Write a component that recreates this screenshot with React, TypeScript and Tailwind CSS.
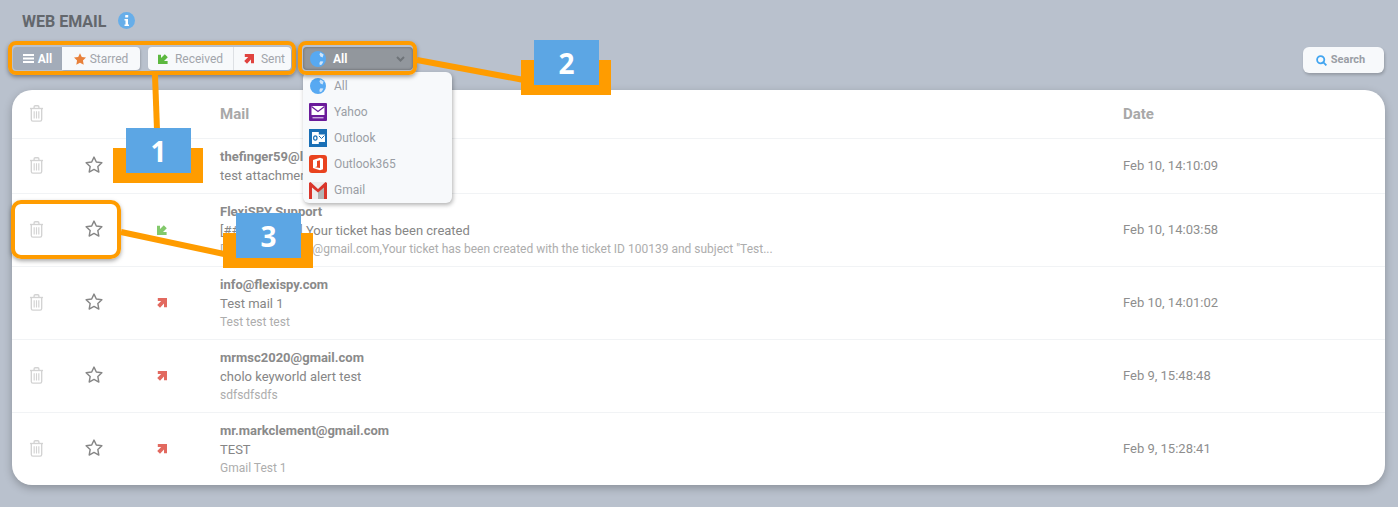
import React from "react";

const Trash = () => (
  <svg className="mt-[-2px]" width="15" height="17" viewBox="0 0 16 19" fill="none" stroke="#d3d3d3" strokeWidth="1.5">
    <path d="M0.7 3.9H15.3" />
    <path d="M5.3 3.7V2.2C5.3 1.3 5.9 0.8 6.6 0.8H9.4C10.1 0.8 10.7 1.3 10.7 2.2V3.7" />
    <path d="M2.2 4V16.2C2.2 17.3 2.9 18 3.9 18H12.1C13.1 18 13.8 17.3 13.8 16.2V4" />
    <path d="M5.4 7V15M8 7V15M10.6 7V15" strokeWidth="1.3" />
  </svg>
);

const Star = () => (
  <svg className="mt-[-3px]" width="18" height="17" viewBox="0 0 20 19" fill="none" stroke="#868686" strokeWidth="1.6" strokeLinejoin="round">
    <path d="M10 1.2L12.6 6.7L18.8 7.5L14.3 11.8L15.4 17.9L10 15L4.6 17.9L5.7 11.8L1.2 7.5L7.4 6.7Z" />
  </svg>
);

const ArrowIn = ({ c = "#83c96b" }: { c?: string }) => (
  <svg width="10" height="10" viewBox="0 0 10 10">
    <path d="M0 0.8H3V4L6.8 0.2L9.8 3.2L6 7H9.6V10H0Z" fill={c} />
  </svg>
);

const ArrowOut = ({ c = "#e2695f" }: { c?: string }) => (
  <svg width="10" height="10" viewBox="0 0 10 10">
    <path d="M10 0V9.2H7V5.6L3 9.8L0.2 7L4.2 3H0.8V0Z" fill={c} />
  </svg>
);

const Globe = ({ s = 16 }: { s?: number }) => (
  <svg width={s} height={s} viewBox="0 0 16 16">
    <circle cx="8" cy="8" r="8" fill="#57a9f2" />
    <path d="M10.5 1.5L13.6 3.6L12.6 6.6L10.4 5.6L9.4 3.2Z" fill="#cfe5fa" />
    <path d="M10.4 10.2L13.4 10.6L11.8 13.6L9.8 14.2L9.4 12Z" fill="#cfe5fa" />
  </svg>
);

const Yahoo = () => (
  <svg width="18" height="18" viewBox="0 0 18 18">
    <rect width="18" height="18" rx="1" fill="#6a1b9a" />
    <rect x="2.5" y="3" width="13" height="9" fill="#fff" />
    <path d="M2.5 3.6L9 8.6L15.5 3.6" fill="none" stroke="#6a1b9a" strokeWidth="1.2" />
    <rect x="3.5" y="14" width="11" height="1.4" fill="#c9a7de" />
  </svg>
);

const Outlook = () => (
  <svg width="18" height="18" viewBox="0 0 18 18">
    <rect width="18" height="18" fill="#1a6fb5" />
    <rect x="9" y="5.5" width="7" height="7.5" fill="#fff" />
    <path d="M9.5 6.5L12.5 9.5L15.5 6.5" fill="none" stroke="#1a6fb5" strokeWidth="1" />
    <rect x="3" y="3" width="6.8" height="12" fill="#fff" />
    <ellipse cx="6.3" cy="9" rx="1.7" ry="2.2" fill="none" stroke="#1a6fb5" strokeWidth="1.2" />
  </svg>
);

const Office = () => (
  <svg width="18" height="18" viewBox="0 0 18 18">
    <rect width="18" height="18" rx="3" fill="#e9431f" />
    <path d="M4 5L11 2.8L14 3.8V14.2L11 15.2L4 13V5ZM6.3 12.2L11 12.9V5.2L8 6V11.4L6.3 11.9Z" fill="#fff" />
  </svg>
);

const Gmail = () => (
  <svg width="18" height="18" viewBox="0 0 18 18">
    <path d="M0 1H18V18H0Z" fill="#ededed" />
    <path d="M9 11L15 6V18H9Z" fill="#b4b4b4" />
    <path d="M0 2L1.5 1L9 8L16.5 1L18 2V18H15V6.6L9 11.6L3 6.6V18H0Z" fill="#d9362b" />
  </svg>
);

const Annotation = ({ o, b, n }: { o: string; b: string; n: string }) => (
  <>
    <div className={`absolute h-[35px] w-[90px] bg-[#ff9c00] ${o}`} />
    <div className={`absolute flex h-[45px] w-[65px] items-center justify-center bg-[#5ca6e4] font-['Open_Sans'] text-[28px] font-bold text-white ${b}`}>
      {n}
    </div>
  </>
);

const Row = ({
  h,
  dir,
  from,
  subject,
  body,
  date,
}: {
  h: string;
  dir?: "in" | "out";
  from: string;
  subject: string;
  body?: string;
  date: string;
}) => (
  <div className={`flex items-center border-t border-[#f1f3f5] ${h}`}>
    <div className="flex w-12 justify-center"><Trash /></div>
    <div className="flex w-[68px] justify-center"><Star /></div>
    <div className="flex w-[68px] justify-center">
      {dir === "in" && <ArrowIn />}
      {dir === "out" && <ArrowOut />}
    </div>
    <div className="ml-6 w-[903px]">
      <div className="text-[13px] leading-[19px] font-bold text-[#8a8a8a]">{from}</div>
      <div className="text-[13px] leading-[19px] text-[#868686]">{subject}</div>
      {body && <div className="text-[12px] leading-[18px] text-[#adadad]">{body}</div>}
    </div>
    <div className="text-[13px] text-[#8e8e8e]">{date}</div>
  </div>
);

const menu: [React.ReactNode, string][] = [
  [<Globe />, "All"],
  [<Yahoo />, "Yahoo"],
  [<Outlook />, "Outlook"],
  [<Office />, "Outlook365"],
  [<Gmail />, "Gmail"],
];

export default function App() {
  return (
    <div className="relative h-[507px] w-[1398px] overflow-hidden bg-[#b9c1cd] font-['Roboto',sans-serif]">
      <div className="flex h-[47px] items-center pl-[22px]">
        <span className="mt-[-3px] text-[16px] font-bold text-[#63676c]">WEB EMAIL</span>
        <svg className="mt-[-7px] ml-[12px]" width="17" height="17" viewBox="0 0 17 17">
          <circle cx="8.5" cy="8.5" r="8.5" fill="#67aee9" />
          <rect x="7.2" y="3" width="3" height="2.6" rx="0.6" fill="#fff" />
          <path d="M6.5 7H10V12.4H11V14H6.5V12.4H7.5V8.6H6.5Z" fill="#fff" />
        </svg>
      </div>

      <div className="flex h-[23px] items-stretch pl-[13px] text-[12px]">
        <div className="flex w-[49px] items-center justify-center gap-[4px] rounded-l-[4px] bg-[#a3acb9] font-bold text-white">
          <svg width="11" height="9" viewBox="0 0 11 9" fill="#fff">
            <rect width="11" height="2" y="0" /><rect width="11" height="2" y="3.5" /><rect width="11" height="2" y="7" />
          </svg>
          All
        </div>
        <div className="flex w-[78px] items-center justify-center gap-[4px] rounded-r-[4px] bg-[#f7f9fb] text-[#a2a5ab] shadow-[1px_1px_2px_rgba(0,0,0,0.15)]">
          <svg width="12" height="12" viewBox="0 0 20 19" fill="#e8803a"><path d="M10 0L13 6.3L20 7.2L14.9 12L16.2 19L10 15.6L3.8 19L5.1 12L0 7.2L7 6.3Z" /></svg>
          Starred
        </div>
        <div className="ml-2 flex w-[86px] items-center justify-center gap-[7px] rounded-l-[4px] border-r border-[#dfe2e6] bg-[#f7f9fb] text-[#a2a5ab] shadow-[1px_1px_2px_rgba(0,0,0,0.15)]">
          <ArrowIn c="#5cb83f" />
          Received
        </div>
        <div className="flex w-[57px] items-center justify-center gap-[7px] rounded-r-[4px] bg-[#f7f9fb] pl-[4px] text-[#a2a5ab] shadow-[1px_1px_2px_rgba(0,0,0,0.15)]">
          <ArrowOut c="#e0433f" />
          Sent
        </div>
        <div className="ml-3 flex w-[110px] items-center rounded-[4px] bg-[#92979d] pr-[8px] pl-[7px] font-bold text-white shadow-[inset_0_0_3px_rgba(0,0,0,0.35)]">
          <Globe />
          <span className="ml-[7px] flex-1">All</span>
          <svg width="9" height="6" viewBox="0 0 9 6" fill="none" stroke="#6f7479" strokeWidth="2"><path d="M1 1L4.5 4.5L8 1" /></svg>
        </div>
        <div className="mr-[14px] ml-auto flex h-[26px] w-[81px] items-center justify-center gap-[4px] self-start rounded-[6px] bg-[#f7f9fb] pr-[6px] text-[11px] font-bold text-[#9a9ea5] shadow-[1px_2px_3px_rgba(0,0,0,0.2)]">
          <svg width="11" height="11" viewBox="0 0 11 11" fill="none" stroke="#42a5f0" strokeWidth="1.8"><circle cx="4.7" cy="4.7" r="3.6" /><path d="M7.4 7.4L10.4 10.4" /></svg>
          Search
        </div>
      </div>

      <div className="mx-3 mt-5 w-[1373px] rounded-[20px] bg-white shadow-[0_3px_8px_rgba(0,0,0,0.25)]">
        <div className="flex h-[48px] items-center">
          <div className="flex w-12 justify-center"><Trash /></div>
          <div className="ml-[160px] w-[903px] text-[15px] font-bold text-[#a8a8a8]">Mail</div>
          <div className="text-[15px] font-bold text-[#a8a8a8]">Date</div>
        </div>
        <Row h="h-[55px]" from="thefinger59@live.com" subject="test attachment" date="Feb 10, 14:10:09" />
        <Row h="h-[73px]" dir="in" from="FlexiSPY Support" subject="[##100139##] Your ticket has been created" body={'Dear mrmsc2020@gmail.com,Your ticket has been created with the ticket ID 100139 and subject "Test...'} date="Feb 10, 14:03:58" />
        <Row h="h-[73px]" dir="out" from="info@flexispy.com" subject="Test mail 1" body="Test test test" date="Feb 10, 14:01:02" />
        <Row h="h-[73px]" dir="out" from="mrmsc2020@gmail.com" subject="cholo keyworld alert test" body="sdfsdfsdfs" date="Feb 9, 15:48:48" />
        <Row h="h-[73px]" dir="out" from="mr.markclement@gmail.com" subject="TEST" body="Gmail Test 1" date="Feb 9, 15:28:41" />
      </div>

      <div className="absolute top-[72px] left-[303px] h-[131px] w-[149px] rounded-[6px] bg-[#f7f9fb] pl-[6px] text-[12px] text-[#9a9ea5] shadow-[1px_2px_4px_rgba(0,0,0,0.3)]">
        {menu.map(([icon, label]) => (
          <div key={label} className="flex h-[26px] items-center gap-[7px] first:mt-px">
            <span className="flex w-[18px] justify-center">{icon}</span>
            {label}
          </div>
        ))}
      </div>

      <div className="absolute top-[41px] left-[8px] h-[34px] w-[288px] rounded-[8px] border-4 border-[#ff9c00] shadow-[0_2px_4px_rgba(0,0,0,0.35)]" />
      <div className="absolute top-[41px] left-[298px] h-[34px] w-[119px] rounded-[8px] border-4 border-[#ff9c00] shadow-[0_2px_4px_rgba(0,0,0,0.35)]" />
      <div className="absolute top-[200px] left-[11px] h-[59px] w-[110px] rounded-[10px] border-4 border-[#ff9c00] shadow-[0_2px_4px_rgba(0,0,0,0.35)]" />
      <svg className="absolute top-0 left-0" width="1398" height="507" fill="none" stroke="#ff9c00" strokeWidth="6">
        <path d="M155 75L157 130" />
        <path d="M417 60L524 80" />
        <path d="M121 232L224 254" />
      </svg>
      <Annotation o="top-[148px] left-[113px]" b="top-[128px] left-[126px]" n="1" />
      <Annotation o="top-[60px] left-[521px]" b="top-[40px] left-[534px]" n="2" />
      <Annotation o="top-[233px] left-[223px]" b="top-[213px] left-[236px]" n="3" />
    </div>
  );
}
